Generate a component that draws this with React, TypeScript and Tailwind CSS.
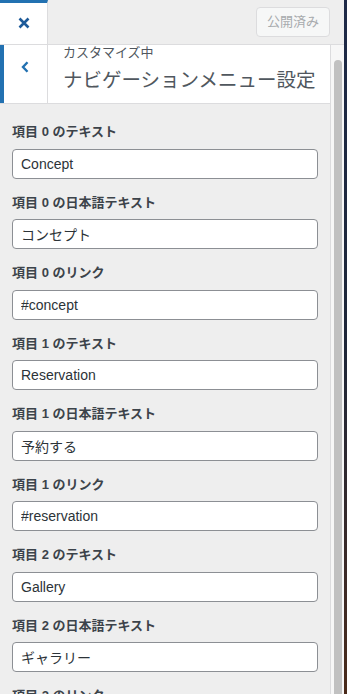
import React from "react";

const font = { fontFamily: '"Liberation Sans", "Noto Sans CJK JP", sans-serif' };

const fields = [
  { n: 0, kind: "のテキスト", value: "Concept" },
  { n: 0, kind: "の日本語テキスト", value: "コンセプト" },
  { n: 0, kind: "のリンク", value: "#concept" },
  { n: 1, kind: "のテキスト", value: "Reservation" },
  { n: 1, kind: "の日本語テキスト", value: "予約する" },
  { n: 1, kind: "のリンク", value: "#reservation" },
  { n: 2, kind: "のテキスト", value: "Gallery" },
  { n: 2, kind: "の日本語テキスト", value: "ギャラリー" },
  { n: 2, kind: "のリンク", value: "#gallery" },
];

export default function App() {
  return (
    <div
      className="w-[347px] h-[694px] flex overflow-hidden bg-[#eeeeee]"
      style={font}
    >
      <div className="w-[344px] flex flex-col">
        {/* Top bar */}
        <div className="h-[45px] flex items-stretch justify-between border-b border-[#dcdcde] bg-[#eeeeee] shrink-0">
          <button className="w-[48px] bg-white border-t-[3px] border-t-[#2271b1] border-r border-r-[#dcdcde] flex items-center justify-center">
            <svg width="12" height="12" viewBox="0 0 12 12" className="-mt-[2px]">
              <path
                d="M1.5 1.5 L10.5 10.5 M10.5 1.5 L1.5 10.5"
                stroke="#1d5a99"
                strokeWidth="2.6"
                strokeLinecap="butt"
              />
            </svg>
          </button>
          <div className="flex items-center pr-[14px]">
            <div className="w-[74px] h-[30px] rounded-[4px] border border-[#dcdcde] bg-[#f6f7f7] flex items-center justify-center text-[13px] text-[#a7aaad]">
              公開済み
            </div>
          </div>
        </div>

        <div className="flex flex-1 min-h-0">
          {/* Panel */}
          <div className="w-[330px] flex flex-col overflow-hidden">
            {/* Section header */}
            <div className="h-[59px] flex bg-white border-b border-[#dcdcde] shrink-0">
              <div className="w-[48px] border-l-4 border-l-[#2271b1] border-r border-r-[#dcdcde] flex justify-center pt-[16px] pr-[2px]">
                <svg width="8" height="12" viewBox="0 0 8 12">
                  <path
                    d="M6.5 1.2 L2 6 L6.5 10.8"
                    fill="none"
                    stroke="#2271b1"
                    strokeWidth="2.4"
                  />
                </svg>
              </div>
              <div className="pl-[15px] pt-[1px] text-[#50575e]">
                <div className="text-[13px] leading-[14px]">カスタマイズ中</div>
                <div className="text-[19.5px] leading-[28px] mt-[6px]">
                  ナビゲーションメニュー設定
                </div>
              </div>
            </div>

            {/* Controls */}
            <div className="px-[12px] pt-[16px]">
              {fields.map((f, i) => (
                <div key={i} className="mb-[12px]">
                  <div className="text-[13px] leading-[24.5px] font-bold text-[#3c434a] mb-[4px]">
                    項目 {f.n} {f.kind}
                  </div>
                  <input
                    readOnly
                    value={f.value}
                    className="w-full h-[30px] rounded-[4px] border border-[#8c8f94] bg-white px-[8px] text-[14px] text-[#2c3338] outline-none"
                    style={font}
                  />
                </div>
              ))}
            </div>
          </div>

          {/* Scrollbar */}
          <div className="w-[14px] border-l border-[#dcdcde] bg-[#f7f7f7] flex justify-center pt-[15px]">
            <div className="w-[8px] h-full rounded-t-full bg-[#c1c1c1]" />
          </div>
        </div>
      </div>

      {/* Preview edge */}
      <div className="w-[3px] bg-gradient-to-b from-[#1e2a48] via-[#1e2638] to-[#4a2a1a]" />
    </div>
  );
}
